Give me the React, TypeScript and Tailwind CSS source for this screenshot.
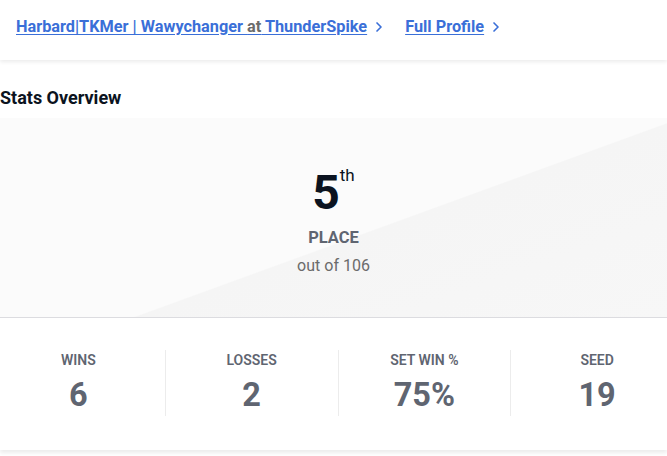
import { ChevronRight } from 'lucide-react';

const stats = [
  { label: 'WINS', value: '6' },
  { label: 'LOSSES', value: '2' },
  { label: 'SET WIN %', value: '75%' },
  { label: 'SEED', value: '19' },
];

export default function App() {
  return (
    <div className="min-h-[456px] overflow-hidden bg-white font-['Roboto',sans-serif]">
      <div className="flex h-[60px] items-start gap-[18px] px-4 pt-[17px] shadow-[0_2px_4px_rgba(0,0,0,0.08)]">
        <a href="#" className="flex items-center gap-1 text-[16.3px] font-bold leading-[20px] text-[#3a6fd8]">
          <span className="underline underline-offset-2">
            Harbard|TKMer | Wawychanger <span className="text-[#6b6b6b]">at</span> ThunderSpike
          </span>
          <ChevronRight className="h-4 w-4" strokeWidth={2.5} />
        </a>
        <a href="#" className="flex items-center gap-1 text-[16.3px] font-bold leading-[20px] text-[#3a6fd8]">
          <span className="underline underline-offset-2">Full Profile</span>
          <ChevronRight className="h-4 w-4" strokeWidth={2.5} />
        </a>
      </div>

      <h2 className="mt-[27px] text-[18px] font-bold leading-[22px] text-[#0b1320]">Stats Overview</h2>

      <div className="mt-[9px] flex h-[200px] flex-col items-center justify-center border-b border-[#dcdce0] bg-[linear-gradient(160deg,#fbfbfb_56%,#f5f5f5_56.3%,#f7f7f7_100%)] pt-[8px]">
        <div className="flex items-start">
          <span className="text-[48px] font-bold leading-[48px] text-[#0b1320]">5</span>
          <span className="mt-[-4px] text-[17px] leading-[20px] text-[#0b1320]">th</span>
        </div>
        <div className="mt-[12px] text-[16.5px] font-bold leading-[18px] text-[#5f6571]">PLACE</div>
        <div className="mt-[10px] text-[16px] leading-[18px] text-[#6b6b6b]">out of 106</div>
      </div>

      <div className="bg-white pb-[34px] pt-[32px] shadow-[0_3px_4px_rgba(0,0,0,0.08)]">
        <div className="ml-[-8px] grid w-[691px] grid-cols-4">
          {stats.map((s, i) => (
            <div
              key={s.label}
              className={`flex h-[66px] flex-col items-center ${i > 0 ? 'border-l border-[#ececec]' : ''}`}
            >
              <div className="mt-[2px] text-[14px] font-semibold leading-[16px] text-[#5f6571]">{s.label}</div>
              <div className="mt-[8px] text-[32.5px] font-bold leading-[38px] text-[#5f6571]">{s.value}</div>
            </div>
          ))}
        </div>
      </div>
    </div>
  );
}
